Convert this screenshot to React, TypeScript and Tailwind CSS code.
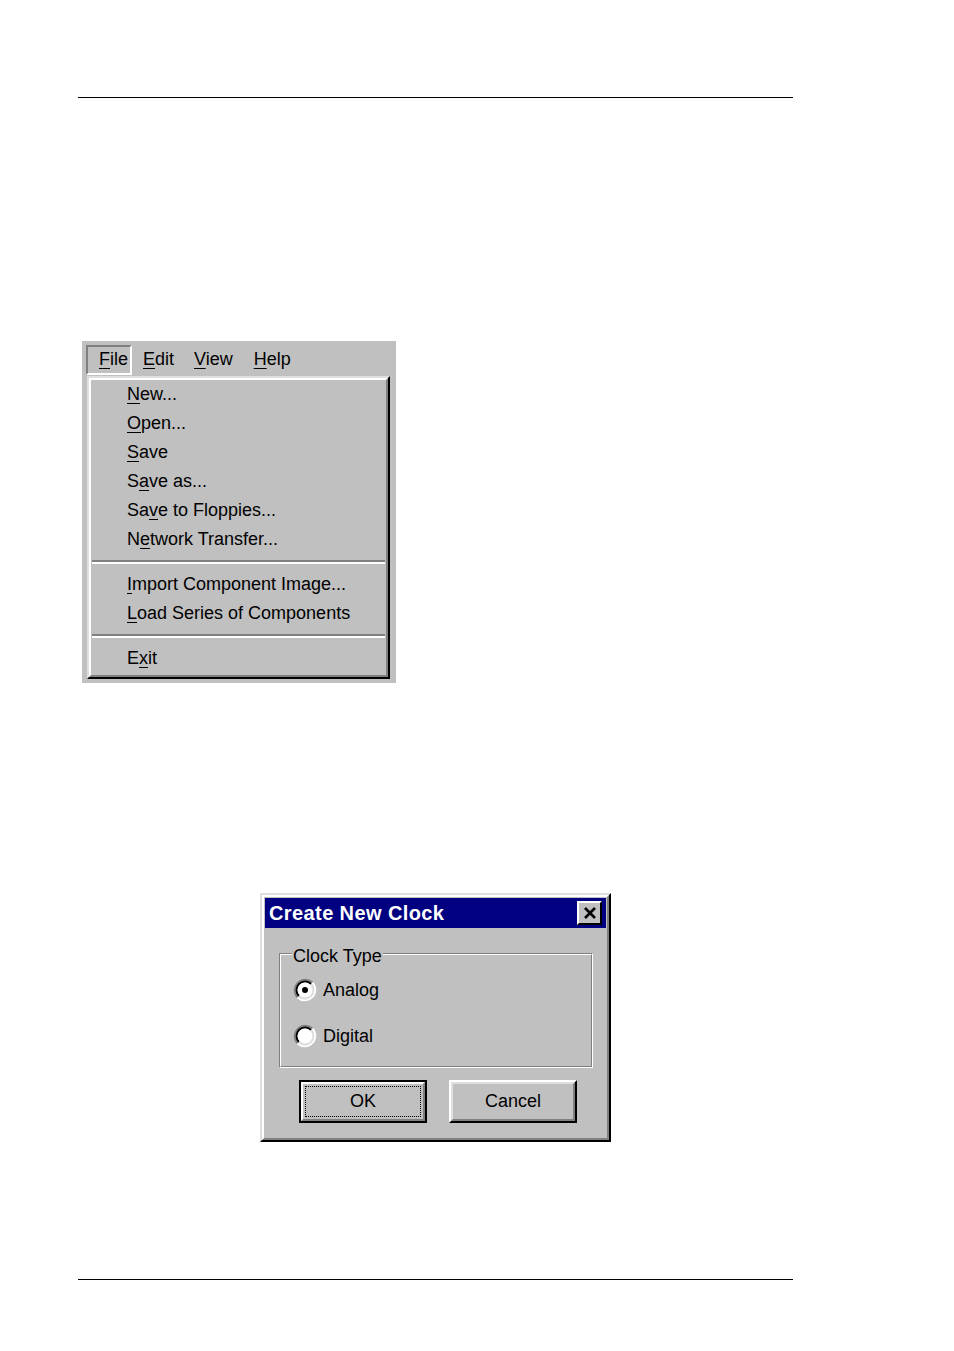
import React from "react";

const font = { fontFamily: '"Liberation Sans", Arial, sans-serif' };

function U({ children }: { children: React.ReactNode }) {
  return <span className="underline underline-offset-[3px] decoration-1">{children}</span>;
}

function MenuRow({ children }: { children: React.ReactNode }) {
  return <div className="h-[29px] flex items-center pl-[36px] text-[18px] text-black">{children}</div>;
}

function Separator() {
  return (
    <div className="h-[16px] flex flex-col justify-center px-[1px]">
      <div className="h-[2px] bg-[#808080]" />
      <div className="h-[2px] bg-white" />
    </div>
  );
}

function Radio({ checked }: { checked?: boolean }) {
  return (
    <svg width="24" height="24" viewBox="0 0 24 24">
      <path d="M4.58 19.42 A10.5 10.5 0 0 1 19.42 4.58" stroke="#808080" strokeWidth="2" fill="none" />
      <path d="M19.42 4.58 A10.5 10.5 0 0 1 4.58 19.42" stroke="#ffffff" strokeWidth="2" fill="none" />
      <path d="M5.99 18.01 A8.5 8.5 0 0 1 18.01 5.99" stroke="#000000" strokeWidth="2" fill="none" />
      <path d="M18.01 5.99 A8.5 8.5 0 0 1 5.99 18.01" stroke="#dfdfdf" strokeWidth="2" fill="none" />
      <circle cx="12" cy="12" r="7.5" fill="#ffffff" />
      {checked && <circle cx="12" cy="12" r="3" fill="#000000" />}
    </svg>
  );
}

function FileMenu() {
  return (
    <div className="w-[314px] h-[342px] bg-[#c0c0c0] pl-[4px] pt-[2px]">
      <div className="flex items-center h-[33px] text-[18px] text-black">
        <div className="h-[30px] w-[46px] flex items-center pl-[11px] border-2 border-t-[#808080] border-l-[#808080] border-r-white border-b-white">
          <span><U>F</U>ile</span>
        </div>
        <span className="ml-[11px]"><U>E</U>dit</span>
        <span className="ml-[20px]"><U>V</U>iew</span>
        <span className="ml-[21px]"><U>H</U>elp</span>
      </div>
      <div className="ml-[1px] w-[303px] h-[303px] border-2 border-t-[#dfdfdf] border-l-[#dfdfdf] border-r-black border-b-black">
        <div className="h-full border-2 border-t-white border-l-white border-r-[#808080] border-b-[#808080]">
          <MenuRow><U>N</U>ew...</MenuRow>
          <MenuRow><U>O</U>pen...</MenuRow>
          <MenuRow><U>S</U>ave</MenuRow>
          <MenuRow>S<U>a</U>ve as...</MenuRow>
          <MenuRow>Sa<U>v</U>e to Floppies...</MenuRow>
          <MenuRow>N<U>e</U>twork Transfer...</MenuRow>
          <Separator />
          <MenuRow><U>I</U>mport Component Image...</MenuRow>
          <MenuRow><U>L</U>oad Series of Components</MenuRow>
          <Separator />
          <MenuRow>E<U>x</U>it</MenuRow>
        </div>
      </div>
    </div>
  );
}

function ClockDialog() {
  return (
    <div className="w-[351px] h-[249px] bg-[#c0c0c0] border-2 border-t-[#dfdfdf] border-l-[#dfdfdf] border-r-black border-b-black">
      <div className="h-full border-2 border-t-white border-l-white border-r-[#808080] border-b-[#808080] px-[1px] pt-[1px]">
        <div className="h-[30px] bg-[#000080] flex items-center justify-between pl-[4px] pr-[4px]">
          <span className="text-white font-bold text-[20px] tracking-[0.02em]">Create New Clock</span>
          <div className="w-[25px] h-[24px] border-2 border-t-white border-l-white border-r-black border-b-black bg-[#c0c0c0] flex items-center justify-center">
            <svg width="14" height="12" viewBox="0 0 14 12">
              <path d="M2 1 L12 11 M12 1 L2 11" stroke="#000" strokeWidth="2.6" />
            </svg>
          </div>
        </div>
        <div className="pl-[14px] pt-[25px]">
          <div className="relative w-[314px] h-[115px] border border-t-[#808080] border-l-[#808080] border-r-white border-b-white">
            <div className="h-full border border-t-white border-l-white border-r-[#808080] border-b-[#808080] pl-[12px] pt-[23px]">
              <div className="flex items-center h-[24px] gap-[6px] text-[18px] text-black">
                <Radio checked />
                <span>Analog</span>
              </div>
              <div className="flex items-center h-[24px] gap-[6px] mt-[22px] text-[18px] text-black">
                <Radio />
                <span>Digital</span>
              </div>
            </div>
            <span className="absolute left-[12px] top-[-9px] bg-[#c0c0c0] px-[1px] text-[18px] leading-[22px] text-black">
              Clock Type
            </span>
          </div>
          <div className="flex mt-[12px] pl-[20px] gap-[22px]">
            <div className="w-[128px] h-[43px] border-2 border-black">
              <div className="h-full border-2 border-t-white border-l-white border-r-[#808080] border-b-[#808080] p-[2px]">
                <div className="h-full border border-dotted border-black flex items-center justify-center text-[18px] text-black">
                  OK
                </div>
              </div>
            </div>
            <div className="w-[128px] h-[43px] border-2 border-t-white border-l-white border-r-black border-b-black">
              <div className="h-full border-2 border-t-[#dfdfdf] border-l-[#dfdfdf] border-r-[#808080] border-b-[#808080] flex items-center justify-center text-[18px] text-black">
                Cancel
              </div>
            </div>
          </div>
        </div>
      </div>
    </div>
  );
}

export default function App() {
  return (
    <div className="w-[954px] h-[1351px] bg-white pt-[97px]" style={font}>
      <div className="ml-[78px] w-[715px] h-px bg-black" />
      <div className="ml-[82px] mt-[243px]">
        <FileMenu />
      </div>
      <div className="ml-[260px] mt-[210px]">
        <ClockDialog />
      </div>
      <div className="ml-[78px] mt-[137px] w-[715px] h-px bg-black" />
    </div>
  );
}
